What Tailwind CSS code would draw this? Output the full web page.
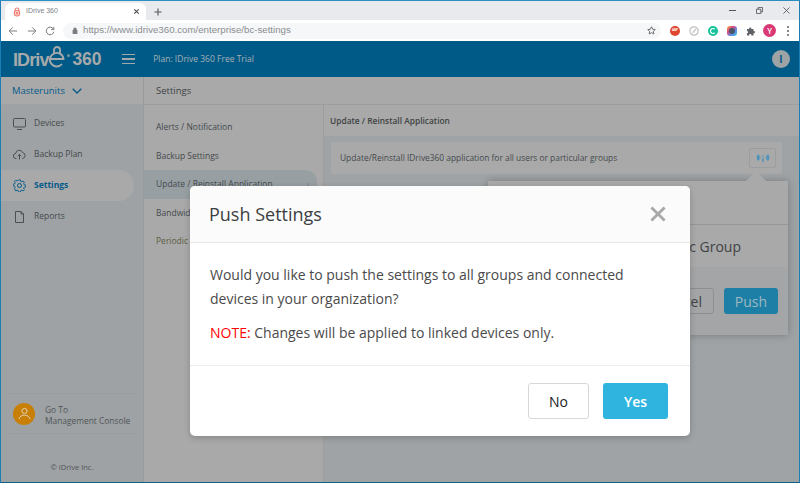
<!DOCTYPE html>
<html lang="en">
  <head>
    <meta charset="UTF-8" />
    <meta name="viewport" content="width=device-width, initial-scale=1.0" />
    <title>IDrive 360</title>
    <script src="https://cdn.jsdelivr.net/npm/@tailwindcss/browser@4"></script>
  </head>
  <body class="w-[800px] h-[483px] overflow-hidden font-['Open_Sans',sans-serif]">
    <div class="relative w-[800px] h-[483px] overflow-hidden flex flex-col border-x border-b border-x-[#1b7fb5] border-b-[#10607f] bg-[#a9a9a9]">
      <!-- browser chrome -->
      <div class="h-[41px] shrink-0 flex flex-col border-t border-[#2a8fc4] bg-white">
        <div class="h-[19px] flex items-end bg-[#e8eaed] text-[#5f6368]">
          <div class="w-[141px] h-[17px] ml-1 flex items-center bg-white rounded-t-md pl-[8px] pr-[6px]">
            <svg class="w-[8px] h-[10px]" viewBox="0 0 10 12" fill="none" stroke="#ef7a6f" stroke-width="1.4"><path d="M2.6 5V3.4a2.4 2.4 0 0 1 4.8 0V5"/><circle cx="5" cy="7.6" r="3.4"/><circle cx="5" cy="7.6" r="1.1"/></svg>
            <span class="ml-[5px] text-[7px] text-[#80848a] font-['Liberation_Sans',sans-serif]">IDrive 360</span>
            <svg class="ml-auto w-[7px] h-[7px]" viewBox="0 0 8 8" stroke="#45494d" stroke-width="1.2"><path d="M1.5 1.5l5 5M6.5 1.5l-5 5"/></svg>
          </div>
          <svg class="ml-[8px] mb-[4px] w-[8px] h-[8px]" viewBox="0 0 10 10" stroke="#55595d" stroke-width="1.4"><path d="M5 .5v9M.5 5h9"/></svg>
          <div class="ml-auto flex items-center self-center gap-[20px] pr-[9px]">
            <svg class="w-[7px] h-[7px]" viewBox="0 0 7 7" stroke="#55595d"><path d="M0 3.5h7"/></svg>
            <svg class="w-[7px] h-[7px]" viewBox="0 0 8 8" fill="none" stroke="#55595d"><path d="M.5 2.5h5v5h-5zM2.5 2.5v-2h5v5h-2"/></svg>
            <svg class="w-[7px] h-[7px]" viewBox="0 0 8 8" stroke="#55595d"><path d="M.5.5l7 7M7.5.5l-7 7"/></svg>
          </div>
        </div>
        <div class="flex-1 flex items-center pl-[7px] pr-[9px]">
          <svg class="w-[10px] h-[10px]" viewBox="0 0 11 11" fill="none" stroke="#7a7e82" stroke-width="1.1"><path d="M10 5.5H1.5M5.3 1.5l-4 4 4 4"/></svg>
          <svg class="ml-[9px] w-[10px] h-[10px]" viewBox="0 0 11 11" fill="none" stroke="#7a7e82" stroke-width="1.1"><path d="M1 5.5h8.5M5.7 1.5l4 4-4 4"/></svg>
          <svg class="ml-[8px] w-[10px] h-[10px]" viewBox="0 0 11 11" fill="none" stroke="#7a7e82" stroke-width="1.1"><path d="M9.4 3.6A4.2 4.2 0 1 0 9.7 6.4"/><path d="M9.7 1v3H6.8"/></svg>
          <div class="ml-[8px] w-[598px] h-[16px] flex items-center rounded-full bg-[#f6f7f8] pl-[9px] pr-[5px]">
            <svg class="w-[6px] h-[7px]" viewBox="0 0 7 8"><path d="M1.5 3.5V2.4a2 2 0 0 1 4 0v1.1h.8V8H.7V3.5z" fill="#7a7e82"/></svg>
            <span class="ml-[5px] text-[9.7px] text-[#8a8e92] font-['Liberation_Sans',sans-serif]">https://www.idrive360.com/enterprise/bc-settings</span>
            <svg class="ml-auto w-[9px] h-[9px]" viewBox="0 0 10 10" fill="none" stroke="#5f6368"><path d="M5 .9l1.25 2.7 2.95.35-2.2 2 .6 2.9L5 7.4 2.4 8.85l.6-2.9-2.2-2 2.95-.35z"/></svg>
          </div>
          <div class="ml-[9px] flex items-center">
            <div class="w-[10px] h-[10px] rounded-full bg-[#e0452f] flex items-center justify-center text-[3px] font-bold text-white">ABP</div>
            <svg class="ml-[9px] w-[10px] h-[10px]" viewBox="0 0 10 10" fill="none" stroke="#c0c0c0" stroke-width="1.2"><circle cx="5" cy="5" r="4.2"/><path d="M3.4 6.8L7 3"/></svg>
            <div class="ml-[9px] w-[10px] h-[10px] rounded-full bg-[#15c39a] flex items-center justify-center"><div class="w-[6px] h-[6px] rounded-full border border-white border-r-transparent"></div></div>
            <div class="ml-[9px] w-[10px] h-[10px] rounded-[3px] bg-[linear-gradient(135deg,#f5b63f,#e0457b,#5a8df0,#3fd0c9)] flex items-center justify-center"><div class="w-[6px] h-[6px] rounded-full bg-[#4a5568]"></div></div>
            <svg class="ml-[9px] w-[10px] h-[10px]" viewBox="0 0 10 10" fill="#5f6368"><path d="M1 3h2.2a1.1 1.1 0 1 1 2.1 0h2.2v2.1a1.1 1.1 0 1 1 0 2.1v2.3H5.3a1.1 1.1 0 1 0-2.1 0H1V7.3a1.1 1.1 0 1 0 0-2.2z"/></svg>
            <div class="ml-[7px] w-[13px] h-[13px] rounded-full bg-[#d93a75] flex items-center justify-center text-[8px] font-semibold text-white leading-none">Y</div>
            <div class="ml-[11px] flex flex-col gap-[2px]">
              <span class="w-[2px] h-[2px] rounded-full bg-[#5f6368]"></span>
              <span class="w-[2px] h-[2px] rounded-full bg-[#5f6368]"></span>
              <span class="w-[2px] h-[2px] rounded-full bg-[#5f6368]"></span>
            </div>
          </div>
        </div>
      </div>

      <!-- app header -->
      <div class="h-[36px] shrink-0 flex items-center bg-[#005a87] pl-[12px] pr-[9px]">
        <div class="flex items-center font-['Liberation_Sans',sans-serif] font-bold text-[#a6a9aa]">
          <span class="mt-[1px] text-[18px] leading-none tracking-[-0.05em]">IDriv</span>
          <svg class="w-[16px] h-[28px]" viewBox="0 0 16 28" fill="none" stroke="#a6a9aa" stroke-width="1.9"><path d="M5 8V5a3 3 0 0 1 6 0v3"/><path d="M1.5 14h13A6.8 6.8 0 1 0 13 19"/></svg>
          <span class="w-[3px] h-[3px] self-start mt-[9px] ml-[2px] rounded-full bg-[#a6a9aa]/70"></span>
          <span class="ml-[3px] mt-[1px] text-[17.5px] leading-none tracking-[-0.01em]">360</span>
        </div>
        <div class="ml-[21px] w-[13px] flex flex-col gap-[3px]">
          <span class="h-[1.5px] bg-[#a6a9aa]"></span>
          <span class="h-[1.5px] bg-[#a6a9aa]"></span>
          <span class="h-[1.5px] bg-[#a6a9aa]"></span>
        </div>
        <span class="ml-[18px] text-[8.5px] font-medium text-[#a6b0b5]">Plan: IDrive 360 Free Trial</span>
        <div class="ml-auto w-[18px] h-[18px] rounded-full bg-[#9ea3a6] flex items-center justify-center text-[10px] font-bold text-[#005a87]">I</div>
      </div>

      <!-- app body -->
      <div class="flex-1 flex min-h-0">
        <div class="w-[143px] shrink-0 flex flex-col bg-[#9ea2a4] border-r border-[#979b9d]">
          <div class="h-[28px] shrink-0 flex items-center gap-[7px] pl-[11px] pt-[1px] bg-[#a9a9a9] border-b border-[#a0a2a3]">
            <span class="text-[9.5px] font-medium text-[#055a8a]">Masterunits</span>
            <svg class="w-[10px] h-[6px]" viewBox="0 0 10 6" fill="none" stroke="#055a8a" stroke-width="1.3"><path d="M.7.7L5 5l4.3-4.3"/></svg>
          </div>
          <div class="flex flex-col mt-[3px] pr-[9px] text-[8.5px] text-[#454a4d]">
            <div class="h-[31px] flex items-center pl-[12px] gap-[8px]">
              <svg class="w-[13px] h-[12px]" viewBox="0 0 13 12" fill="none" stroke="#4a4f52"><rect x=".5" y=".5" width="12" height="8.5" rx="1"/><path d="M4 11.5h5"/></svg>
              <span>Devices</span>
            </div>
            <div class="h-[31px] flex items-center pl-[12px] gap-[8px]">
              <svg class="w-[13px] h-[12px]" viewBox="0 0 13 12" fill="none" stroke="#4a4f52"><path d="M3.5 9.5H3a2.5 2.5 0 0 1-.3-5A3.5 3.5 0 0 1 9.5 3.6a3 3 0 0 1 .3 5.9h-.6"/><path d="M6.5 10.5v-5M4.7 7.2l1.8-1.800 1.800 1.800"/></svg>
              <span>Backup Plan</span>
            </div>
            <div class="h-[31px] flex items-center pl-[12px] gap-[8px] rounded-r-full bg-[#a9a9a9] text-[#055a8a] font-bold">
              <svg class="w-[13px] h-[13px]" viewBox="0 0 13 13" fill="none" stroke="#055a8a"><circle cx="6.5" cy="6.5" r="2"/><path d="M5.5.7h2l.3 1.600 1.300.6 1.400-.9 1.400 1.400-.9 1.400.6 1.300 1.600.3v2l-1.600.3-.6 1.300.9 1.400-1.400 1.400-1.400-.9-1.300.6-.3 1.600h-2l-.3-1.600-1.300-.6-1.400.9L1 10.400l.9-1.400-.6-1.300-1.600-.3v-2l1.600-.3.6-1.300L1 2.400 2.400 1l1.400.9 1.300-.6z" transform="translate(.5 .2) scale(.92)"/></svg>
              <span>Settings</span>
            </div>
            <div class="h-[31px] flex items-center pl-[12px] gap-[8px]">
              <svg class="w-[13px] h-[12px]" viewBox="0 0 13 12" fill="none" stroke="#4a4f52"><path d="M2.5.5H8L10.5 3v8.5h-8zM8 .5V3h2.5"/></svg>
              <span>Reports</span>
            </div>
          </div>
          <div class="mt-auto mx-[5px] h-[41px] flex items-center gap-[10px] pl-[7px] border-y border-[#979fa3]">
            <div class="w-[22px] h-[22px] rounded-full bg-[#c77f05] flex items-center justify-center shrink-0">
              <svg class="w-[13px] h-[13px]" viewBox="0 0 13 13" fill="none" stroke="#e0d2b8"><circle cx="6.5" cy="4" r="2.6"/><path d="M1 12c.6-2.6 2.6-3.8 5.5-3.8S11.4 9.4 12 12"/></svg>
            </div>
            <span class="mt-[2px] text-[8.4px] leading-[11px] text-[#505558]">Go To<br />Management Console</span>
          </div>
          <div class="h-[48px] shrink-0 flex items-end pb-[9px] justify-center text-[7.5px] text-[#505558]">© IDrive Inc.</div>
        </div>

        <div class="flex-1 flex flex-col min-w-0">
          <div class="h-[28px] shrink-0 flex items-center pl-[12px] pt-[2px] border-b border-[#9d9d9d] text-[9.5px] text-[#3f4345]">Settings</div>
          <div class="flex-1 flex min-h-0">
            <div class="w-[180px] shrink-0 flex flex-col pr-[6px] pt-[7px] border-r border-[#9d9d9d] text-[8.5px] text-[#454a4d]">
              <div class="h-[29px] flex items-center pl-[12px] pt-[1px]">Alerts / Notification</div>
              <div class="h-[29px] flex items-center pl-[12px] pt-[1px]">Backup Settings</div>
              <div class="h-[29px] flex items-center justify-between pl-[12px] pr-[8px] rounded-r-[12px] bg-[#979fa3]"><span>Update / Reinstall Application</span><span class="text-[#777b7d]">›</span></div>
              <div class="h-[28px] flex items-center pl-[12px]">Bandwidth Throttle</div>
              <div class="h-[29px] flex items-center pl-[12px] text-[#5c5e3f]">Periodic Backup</div>
            </div>
            <div class="flex-1 flex flex-col min-w-0">
              <div class="h-[31px] shrink-0 flex items-center pl-[6px] pt-[1px] text-[8.4px] font-semibold text-[#3f4345]">Update / Reinstall Application</div>
              <div class="flex-1 bg-[#9fa3a5] pt-[6px] pl-[7px] pr-[17px]">
                <div class="h-[32px] flex items-center justify-between bg-[#a9a9a9] pl-[9px] pr-[6px] text-[8.4px] text-[#454a4d]">
                  <span>Update/Reinstall IDrive360 application for all users or particular groups</span>
                  <div class="w-[27px] h-[20px] flex items-center justify-center border border-[#9b9d9e] rounded-[2px]">
                    <svg class="w-[14px] h-[10px]" viewBox="0 0 16 10" fill="#4d94bd"><ellipse cx="2.5" cy="4.5" rx="1.6" ry="3.6"/><ellipse cx="13.5" cy="4.5" rx="1.6" ry="3.6"/><path d="M4 3l1.5 1.5L4 6zM12 3l-1.5 1.5L12 6z"/><rect x="7.2" y="2" width="1.6" height="1.6"/><rect x="7.2" y="5" width="1.6" height="4.5"/></svg>
                  </div>
                </div>
              </div>
            </div>
          </div>
        </div>
      </div>

      <!-- popover behind the dialog -->
      <div class="absolute left-[487px] top-[181px] w-[300px] h-[154px] flex flex-col bg-[#a9a9a9] shadow-[0_0_8px_rgba(0,0,0,0.25)]">
        <div class="absolute -top-[10px] right-[22px] w-0 h-0 border-x-[10px] border-x-transparent border-b-[10px] border-b-[#a9a9a9]"></div>
        <div class="h-[44px] shrink-0 border-b border-[#969696]"></div>
        <div class="h-[42px] shrink-0 flex items-center justify-end pr-[47px] text-[14px] text-[#3f4345]">c Group</div>
        <div class="flex-1 flex items-center justify-end gap-[10px] pr-[10px] bg-[#a4a5a6]">
          <div class="w-[70px] h-[26px] flex items-center justify-end pr-[11px] rounded-[3px] border border-[#8e8e8e] text-[14px] font-medium text-[#3f4345]">Cancel</div>
          <div class="w-[54px] h-[26px] flex items-center justify-center rounded-[3px] bg-[#1d7fa5] text-[14px] font-medium text-[#9fb9c4]">Push</div>
        </div>
      </div>

      <!-- dialog -->
      <div class="absolute left-[189px] top-[186px] w-[500px] h-[250px] flex flex-col rounded-[5px] bg-white shadow-[0_2px_6px_rgba(0,0,0,0.2)]">
        <div class="h-[57px] shrink-0 flex items-center justify-between pl-[19px] pr-[24px] rounded-t-[5px] bg-[#fbfbfb] border-b border-[#e7e7e7]">
          <span class="text-[18px] text-[#3c3f41]">Push Settings</span>
          <svg class="w-[16px] h-[16px]" viewBox="0 0 17 17" stroke="#a8a8a8" stroke-width="3"><path d="M1.5 1.5l14 14M15.5 1.5l-14 14"/></svg>
        </div>
        <div class="flex-1 px-[20px] pt-[20px] border-b border-[#ececec] text-[14px] leading-[24px] text-[#4a4a4a]">
          <p>Would you like to push the settings to all groups and connected devices in your organization?</p>
          <p class="mt-[10px]"><span class="text-[#f00]">NOTE:</span> Changes will be applied to linked devices only.</p>
        </div>
        <div class="h-[70px] shrink-0 flex items-center justify-end gap-[14px] pr-[22px]">
          <button class="w-[61px] h-[36px] rounded-[3px] border border-[#d8d8d8] bg-white text-[14px] text-[#222]">No</button>
          <button class="w-[65px] h-[36px] rounded-[3px] bg-[#2fb4e0] text-[14px] font-semibold text-white">Yes</button>
        </div>
      </div>
    </div>
  </body>
</html>
